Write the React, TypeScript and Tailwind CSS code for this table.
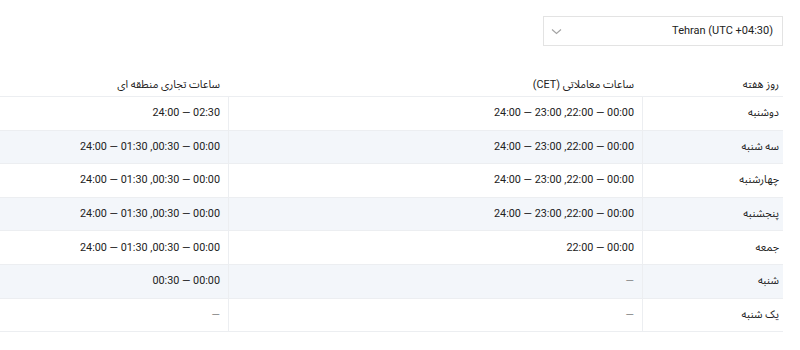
const rows = [
  { day: "دوشنبه", cet: "00:00 — 22:00, 23:00 — 24:00", local: "02:30 — 24:00" },
  { day: "سه شنبه", cet: "00:00 — 22:00, 23:00 — 24:00", local: "00:00 — 00:30, 01:30 — 24:00" },
  { day: "چهارشنبه", cet: "00:00 — 22:00, 23:00 — 24:00", local: "00:00 — 00:30, 01:30 — 24:00" },
  { day: "پنجشنبه", cet: "00:00 — 22:00, 23:00 — 24:00", local: "00:00 — 00:30, 01:30 — 24:00" },
  { day: "جمعه", cet: "00:00 — 22:00", local: "00:00 — 00:30, 01:30 — 24:00" },
  { day: "شنبه", cet: "", local: "00:00 — 00:30" },
  { day: "یک شنبه", cet: "", local: "" },
]

function Cell({ value, last }: { value: string; last?: boolean }) {
  return (
    <div className={`flex items-center px-2 ${last ? "" : "border-l border-[#eceef1]"}`}>
      {value ? <span>{value}</span> : <span className="text-[#8a8a8a]">—</span>}
    </div>
  )
}

export default function App() {
  return (
    <div
      dir="rtl"
      className="w-[800px] h-[350px] bg-white text-[#222] text-[10.8px] overflow-hidden"
      style={{ fontFamily: "Roboto, 'Noto Sans Arabic', 'DejaVu Sans', sans-serif" }}
    >
      <div className="flex pr-[17px] pt-4">
        <div className="w-[240px] h-[30px] border border-[#e3e3e3] flex items-center justify-between pr-[9px] pl-[7px]">
          <span dir="ltr" className="text-[11px] text-[#222]">Tehran (UTC +04:30)</span>
          <svg width="11" height="7" viewBox="0 0 11 7" fill="none" className="mt-px">
            <polyline points="1,1.5 5.5,5.5 10,1.5" stroke="#a3a3a3" strokeWidth="1.1" />
          </svg>
        </div>
      </div>

      <div className="w-[783px] mr-[17px] mt-[28px]">
        <div className="grid grid-cols-[141px_414px_228px] h-[23px] border-b border-[#eceef1]">
          <div className="flex items-center pr-1 pl-2">روز هفته</div>
          <div className="flex items-center px-2">ساعات معاملاتی (CET)</div>
          <div className="flex items-center px-2">ساعات تجاری منطقه ای</div>
        </div>
        {rows.map((row, i) => (
          <div
            key={i}
            className={`grid grid-cols-[141px_414px_228px] h-[33.6px] border-b border-[#eceef1] ${
              i % 2 === 1 ? "bg-[#f3f6fa]" : "bg-white"
            }`}
          >
            <div className="flex items-center pr-1 pl-2 border-l border-[#eceef1]">{row.day}</div>
            <Cell value={row.cet} />
            <Cell value={row.local} last />
          </div>
        ))}
      </div>
    </div>
  )
}
